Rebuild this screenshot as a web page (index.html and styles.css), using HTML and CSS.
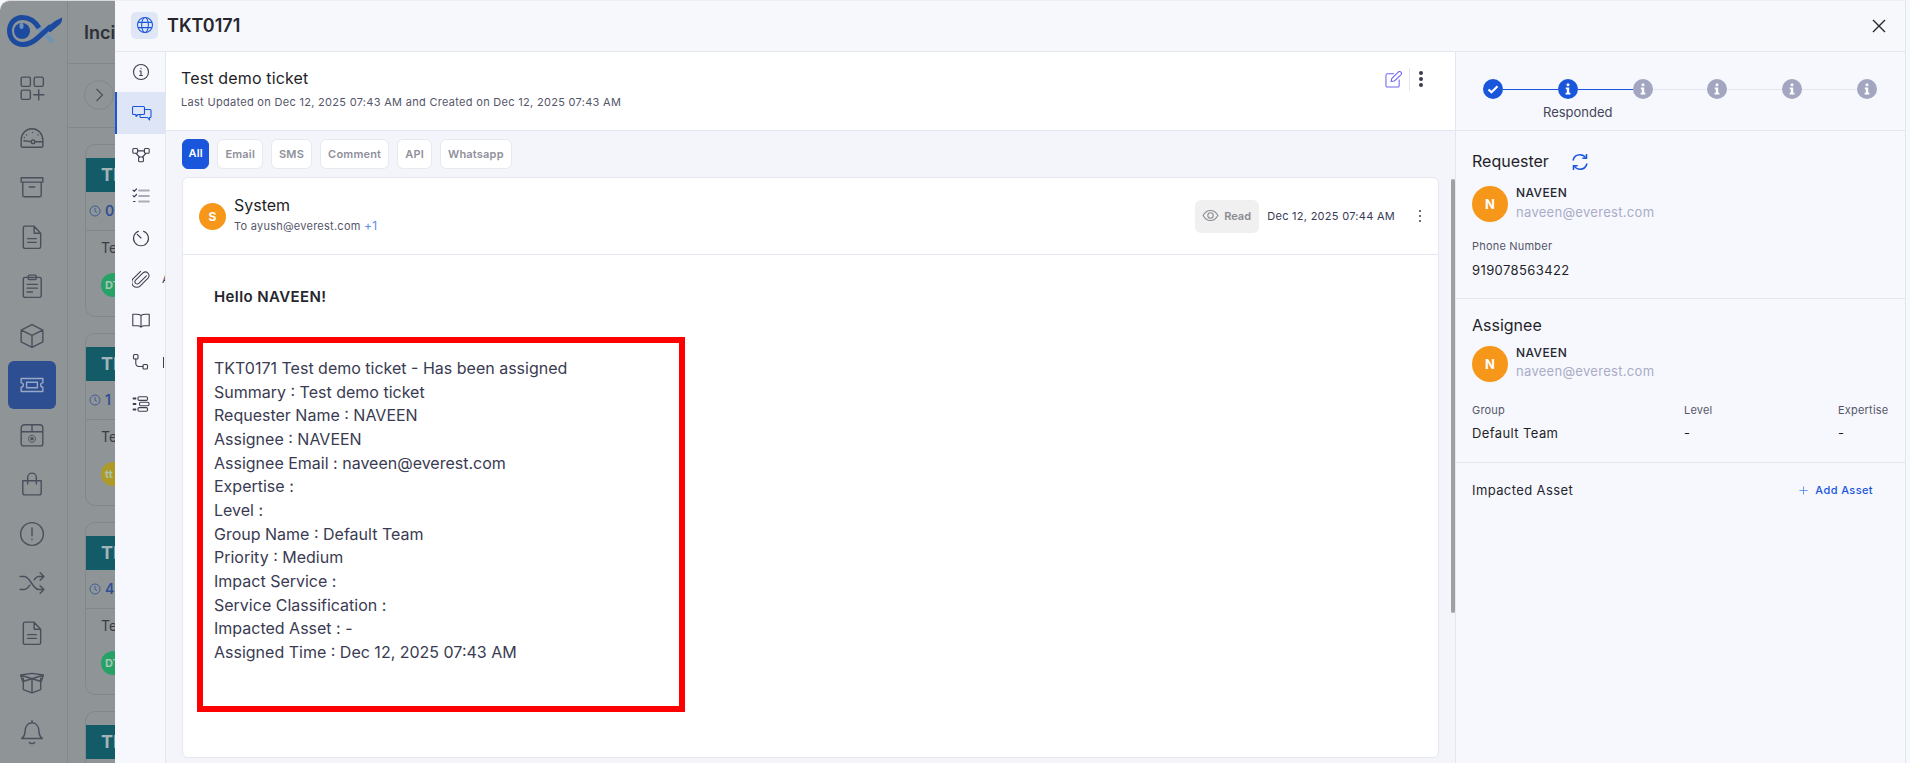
FILE: index.html
```html
<!DOCTYPE html>
<html lang="en">
<head>
    <meta charset="UTF-8">
    <meta name="viewport" content="width=device-width, initial-scale=1.0">
    <title>TKT0171</title>
    <link rel="stylesheet" href="styles.css">
</head>
<body>
    <svg class="defs" aria-hidden="true">
        <symbol id="step-i" viewBox="0 0 20 20">
            <circle cx="10" cy="5.8" r="1.5" fill="#fff"/>
            <path d="M7.8 8.6h3.4v5.2h1.2v1.6H7.6v-1.6h1.2v-3.6h-1z" fill="#fff"/>
        </symbol>
        <symbol id="eye" viewBox="0 0 24 24">
            <path d="M1.500 12c2.600-4.700 6.200-7 10.500-7s7.900 2.300 10.500 7c-2.600 4.700-6.200 7-10.500 7S4.100 16.700 1.500 12z" fill="none" stroke="currentColor" stroke-width="1.500"/>
            <circle cx="12" cy="12" r="3.800" fill="none" stroke="currentColor" stroke-width="1.500"/>
        </symbol>
    </svg>

    <!-- page behind the drawer, dimmed -->
    <div class="backdrop">
        <aside class="sidebar">
            <svg class="logo" viewBox="0 0 55 32">
                <path d="M31 12 46 27" fill="none" stroke="#6f93b5" stroke-width="4.500"/>
                <path d="M32 13C28 6 22 2.500 15 2.500 8 2.500 2.500 8 2.500 16S8.500 29.500 16 29.500c6 0 10-2.500 14-6L44 11" fill="none" stroke="#1c4a9e" stroke-width="5"/>
                <path d="M55 2.500c.3 3-.5 5-2.500 7L43 17.500l-4-4.500 9-7z" fill="#1c4a9e"/>
                <circle cx="15" cy="16" r="8" fill="#1c4a9e"/>
                <rect x="12.500" y="8" width="4" height="6" rx="2" fill="#6f93b5"/>
            </svg>
            <nav class="nav">
                <a class="nav-item"><svg viewBox="0 0 24 24"><rect x="2" y="2" width="8.500" height="8.500" rx="1.500"/><rect x="14" y="2" width="8.500" height="8.500" rx="1.500"/><rect x="2" y="14" width="8.500" height="8.500" rx="1.500"/><path d="M18.200 13.500v9.500M13.500 18.200H23"/></svg></a>
                <a class="nav-item"><svg viewBox="0 0 24 24"><path d="M3 20.500h18c.7 0 1-.5 1-1.200V14C22 8 17.500 3.500 12 3.500S2 8 2 14v5.300c0 .7.300 1.200 1 1.200z"/><circle cx="13" cy="15.500" r="1.700"/><path d="M4.500 14.500l6.700.8M14.700 15.500H22M7 9.200v.1M12.500 6.800v.1M17.500 9.200v.1M5 11.500v.1"/></svg></a>
                <a class="nav-item"><svg viewBox="0 0 24 24"><path d="M2 3.500h20v4H2zM3.500 7.500v12a1.500 1.500 0 0 0 1.500 1.500h14a1.500 1.500 0 0 0 1.500-1.500v-12M9.500 12h5"/></svg></a>
                <a class="nav-item"><svg viewBox="0 0 24 24"><path d="M4 3.500A1.500 1.500 0 0 1 5.500 2H14l6 6.500V21a1.500 1.500 0 0 1-1.500 1.500h-13A1.500 1.500 0 0 1 4 21zM14 2v6.500h6M8 13.500h8M8 17h8"/></svg></a>
                <a class="nav-item"><svg viewBox="0 0 24 24"><rect x="4" y="4" width="16.500" height="18.500" rx="1.500"/><rect x="8.500" y="2" width="7.500" height="4" rx="1"/><path d="M7.500 10.500h9.500M7.500 14h9.500M7.500 17.500h5"/></svg></a>
                <a class="nav-item"><svg viewBox="0 0 24 24"><path d="M12 1.500 22 6.500v11l-10 5-10-5v-11zM2 6.500l10 5 10-5M12 11.500v11"/></svg></a>
                <a class="nav-item nav-item-active"><svg viewBox="0 0 24 24"><path d="M2 6h20v4a2 2 0 0 0 0 4v4H2v-4a2 2 0 0 0 0-4zM7 9.500h10v5H7z"/></svg></a>
                <a class="nav-item"><svg viewBox="0 0 24 24"><path d="M2 9V5.500A3 3 0 0 1 5 2.500h14a3 3 0 0 1 3 3V9M12 2.500V9M2 9h20v11a2 2 0 0 1-2 2H4a2 2 0 0 1-2-2z"/><circle cx="12" cy="15.500" r="1"/><circle cx="12" cy="15.500" r="3.200" stroke-dasharray="1.500 .7" stroke-width=".9"/></svg></a>
                <a class="nav-item"><svg viewBox="0 0 24 24"><path d="M3.500 9h17v11a2 2 0 0 1-2 2h-13a2 2 0 0 1-2-2zM8 12V6a4 4 0 0 1 8 0v6"/></svg></a>
                <a class="nav-item"><svg viewBox="0 0 24 24"><circle cx="12" cy="12" r="10.500"/><path d="M12 6.500v7M12 16.800v.4"/></svg></a>
                <a class="nav-item"><svg viewBox="0 0 24 24"><path d="M1 6h4c5 0 8 12 13 12h5M1 18h4c2 0 3.500-2 5-4M14 9c1-1.500 2.500-3 4-3h5M19.500 2.500 23 6l-3.500 3.500M19.500 14.500 23 18l-3.500 3.500"/></svg></a>
                <a class="nav-item"><svg viewBox="0 0 24 24"><path d="M4 3.500A1.500 1.500 0 0 1 5.500 2H14l6 6.500V21a1.500 1.500 0 0 1-1.500 1.500h-13A1.500 1.500 0 0 1 4 21zM14 2v6.500h6M8 13.500h8M8 17h8"/></svg></a>
                <a class="nav-item"><svg viewBox="0 0 24 24"><path d="M12 9v13M4 8.500V19l8 3 8-3V8.500M12 9 1.500 5.500l2 6L12 9l8.500 2.500 2-6zM1.500 5.500 12 4l10.500 1.500"/></svg></a>
                <a class="nav-item"><svg viewBox="0 0 24 24"><path d="M12 1.500v2M5.500 12c0-5 2.500-8.500 6.500-8.500s6.500 3.500 6.500 8.500c0 3 1 4.500 3 6H2.500c2-1.500 3-3 3-6zM9.500 21.500c1 1.500 4 1.500 5 0"/></svg></a>
            </nav>
        </aside>
        <main class="peek">
            <div class="peek-title">Incidents</div>
            <div class="peek-tools"><span class="peek-toggle"><svg viewBox="0 0 12 20"><path d="M2 2l8 8-8 8"/></svg></span></div>
            <div class="peek-list">
                <div class="peek-card">
                    <div class="peek-band">TKT0171</div>
                    <div class="peek-time"><svg viewBox="0 0 24 24"><circle cx="12" cy="12" r="10"/><path d="M12 6v6.500l4 2.500"/></svg>0</div>
                    <div class="peek-text">Test</div>
                    <span class="peek-avatar peek-avatar-green">DT</span>
                </div>
                <div class="peek-card">
                    <div class="peek-band">TKT0170</div>
                    <div class="peek-time"><svg viewBox="0 0 24 24"><circle cx="12" cy="12" r="10"/><path d="M12 6v6.500l4 2.500"/></svg>1</div>
                    <div class="peek-text">Test</div>
                    <span class="peek-avatar peek-avatar-gold">tt</span>
                </div>
                <div class="peek-card">
                    <div class="peek-band">TKT0169</div>
                    <div class="peek-time"><svg viewBox="0 0 24 24"><circle cx="12" cy="12" r="10"/><path d="M12 6v6.500l4 2.500"/></svg>4</div>
                    <div class="peek-text">Test</div>
                    <span class="peek-avatar peek-avatar-green">DT</span>
                </div>
                <div class="peek-card">
                    <div class="peek-band">TKT0168</div>
                </div>
            </div>
        </main>
    </div>

    <div class="drawer">
        <div class="drawer-inner">
            <header class="drawer-head">
                <span class="head-icon">
                    <svg viewBox="0 0 24 24"><circle cx="12" cy="12" r="10"/><ellipse cx="12" cy="12" rx="4.500" ry="10"/><path d="M2.800 8.500h18.400M2.800 15.500h18.400"/></svg>
                </span>
                <h1>TKT0171</h1>
                <svg class="close" viewBox="0 0 14 14"><path d="M1 1l12 12M13 1 1 13"/></svg>
            </header>

            <div class="drawer-body">
                <nav class="rail">
                    <a class="rail-item"><svg viewBox="0 0 18 18"><circle cx="9" cy="9" r="7.500"/><path d="M9 5.200v.6M7.800 8H9v4.500M7.600 12.500h2.800"/></svg></a>
                    <a class="rail-item rail-item-active"><svg viewBox="0 0 20 18"><path d="M1.500 2.500h10a1 1 0 0 1 1 1v6a1 1 0 0 1-1 1H6l-2 2v-2H1.500a1 1 0 0 1-1-1v-6a1 1 0 0 1 1-1z"/><path d="M13 5.500h5a1 1 0 0 1 1 1v6a1 1 0 0 1-1 1h-.5v2.500l-2-2.500H9a1 1 0 0 1-1-1v-2"/></svg></a>
                    <a class="rail-item"><svg viewBox="0 0 18 18"><rect x=".8" y="2.500" width="4.800" height="4.800" rx="1"/><rect x="12.400" y="2.500" width="4.800" height="4.800" rx="1"/><rect x="6.600" y="11" width="4.800" height="4.800" rx="1"/><path d="M5.600 4.900h6.800M4 7.300l3.500 3.700M14 7.300l-3.500 3.700"/></svg></a>
                    <a class="rail-item rail-item-muted"><svg viewBox="0 0 18 18"><path d="M7 3.500h10M7 9h10M7 14.500h10" stroke="#a9abb8" stroke-width="1.800"/><path d="M1 3.200l1.200 1.200L4.500 2M1 8.700l1.200 1.200L4.500 7.500M1.500 14.500h1.500" stroke-width="1.200"/></svg></a>
                    <a class="rail-item"><svg viewBox="0 0 18 18"><path d="M6.500 2.200A7.500 7.500 0 1 0 11.500 2.200"/><path d="M5.200 5.300 9 9"/></svg></a>
                    <a class="rail-item"><svg viewBox="0 0 18 18"><path d="M15.500 5.500 7.600 13.400a2.300 2.300 0 0 1-3.300-3.300l7.900-7.800a3.800 3.800 0 0 1 5.300 5.300l-8.300 8.300a5.200 5.200 0 0 1-7.400-7.400L9.500 1" transform="translate(-.5 .5) scale(.96)"/></svg><span class="rail-clip">A</span></a>
                    <a class="rail-item"><svg viewBox="0 0 18 18"><path d="M9 3.500C7.800 2.700 6.300 2.300 4.500 2.300H.8v11.500h4.500c1.500 0 2.800.4 3.700 1.300.9-.9 2.200-1.300 3.700-1.300h4.500V2.300h-3.700c-1.800 0-3.300.4-4.500 1.200zM9 3.500v11.600"/></svg></a>
                    <a class="rail-item"><svg viewBox="0 0 18 18"><rect x="1.500" y="1.500" width="4.500" height="4.500" rx="1"/><rect x="11" y="11.500" width="4.500" height="4.500" rx="1"/><path d="M3.800 6v4.500a3 3 0 0 0 3 3H11"/></svg><span class="rail-clip rail-clip-bar"></span></a>
                    <a class="rail-item"><svg viewBox="0 0 18 18"><rect x="6" y="1.800" width="9.500" height="3.600" rx="1.200"/><rect x="7.500" y="7.200" width="9.500" height="3.600" rx="1.200"/><rect x="6" y="12.600" width="9.500" height="3.600" rx="1.200"/><path d="M1.500 3.500h2M1.500 9h2M1.500 14.500h2" stroke-width="1.800"/></svg></a>
                </nav>

                <section class="middle">
                    <div class="topic">
                        <div class="topic-text">
                            <h2>Test demo ticket</h2>
                            <p>Last Updated on Dec 12, 2025 07:43 AM and Created on Dec 12, 2025 07:43 AM</p>
                        </div>
                        <svg class="edit" viewBox="0 0 18 18"><path d="M9.500 3H2.500A1.500 1.500 0 0 0 1 4.500v11A1.500 1.500 0 0 0 2.500 17h11a1.500 1.500 0 0 0 1.500-1.500V9"/><path d="M6.500 11l.7-3L14 1.200a1.500 1.500 0 0 1 2.800 2.800L10 10.500z"/></svg>
                        <span class="topic-sep"></span>
                        <span class="dots dots-big"><i></i><i></i><i></i></span>
                    </div>

                    <div class="thread-wrap">
                        <div class="thread">
                            <div class="tabs">
                                <button class="tab tab-active">All</button>
                                <button class="tab">Email</button>
                                <button class="tab">SMS</button>
                                <button class="tab">Comment</button>
                                <button class="tab">API</button>
                                <button class="tab">Whatsapp</button>
                            </div>
                            <article class="message">
                                <div class="message-head">
                                    <span class="avatar avatar-small">S</span>
                                    <div class="sender">
                                        <div class="sender-name">System</div>
                                        <div class="sender-to">To ayush@everest.com <span class="more">+1</span></div>
                                    </div>
                                    <span class="read"><svg><use href="#eye"/></svg>Read</span>
                                    <span class="message-date">Dec 12, 2025 07:44 AM</span>
                                    <span class="dots"><i></i><i></i><i></i></span>
                                </div>
                                <div class="message-body">
                                    <p class="hello">Hello NAVEEN!</p>
                                    <div class="mark">
                                        <p>TKT0171 Test demo ticket - Has been assigned</p>
                                        <p>Summary : Test demo ticket</p>
                                        <p>Requester Name : NAVEEN</p>
                                        <p>Assignee : NAVEEN</p>
                                        <p>Assignee Email : naveen@everest.com</p>
                                        <p>Expertise :</p>
                                        <p>Level :</p>
                                        <p>Group Name : Default Team</p>
                                        <p>Priority : Medium</p>
                                        <p>Impact Service :</p>
                                        <p>Service Classification :</p>
                                        <p>Impacted Asset : -</p>
                                        <p>Assigned Time : Dec 12, 2025 07:43 AM</p>
                                    </div>
                                </div>
                            </article>
                        </div>
                        <div class="scroll"><div class="scroll-thumb"></div></div>
                    </div>
                </section>

                <aside class="details">
                    <div class="status">
                        <div class="steps">
                            <span class="step step-done"><svg viewBox="0 0 20 20"><path d="M5.500 10.500l3 2.800 6-6" fill="none" stroke="#fff" stroke-width="2.200"/></svg></span>
                            <span class="step-line step-line-on"></span>
                            <span class="step step-done"><svg><use href="#step-i"/></svg></span>
                            <span class="step-line step-line-on"></span>
                            <span class="step"><svg><use href="#step-i"/></svg></span>
                            <span class="step-line"></span>
                            <span class="step"><svg><use href="#step-i"/></svg></span>
                            <span class="step-line"></span>
                            <span class="step"><svg><use href="#step-i"/></svg></span>
                            <span class="step-line"></span>
                            <span class="step"><svg><use href="#step-i"/></svg></span>
                        </div>
                        <div class="step-label">Responded</div>
                    </div>

                    <div class="block block-requester">
                        <div class="block-title">
                            <h3>Requester</h3>
                            <svg class="refresh" viewBox="0 0 18 18"><path d="M2 7.500C2.800 4 5.500 1.800 9 1.800c2.300 0 4.300 1 5.700 2.800M16 10.500c-.8 3.500-3.500 5.700-7 5.700-2.300 0-4.300-1-5.700-2.800"/><path d="M15.500 1v4.200h-4.200M2.500 17v-4.200h4.200"/></svg>
                        </div>
                        <div class="person">
                            <span class="avatar">N</span>
                            <div>
                                <div class="person-name">NAVEEN</div>
                                <div class="person-mail">naveen@everest.com</div>
                            </div>
                        </div>
                        <div class="field-label field-phone">Phone Number</div>
                        <div class="field-value">919078563422</div>
                    </div>

                    <div class="block block-assignee">
                        <div class="block-title">
                            <h3>Assignee</h3>
                        </div>
                        <div class="person">
                            <span class="avatar">N</span>
                            <div>
                                <div class="person-name">NAVEEN</div>
                                <div class="person-mail">naveen@everest.com</div>
                            </div>
                        </div>
                        <div class="assign-grid">
                            <div class="field-label">Group</div>
                            <div class="field-label">Level</div>
                            <div class="field-label">Expertise</div>
                            <div class="field-value">Default Team</div>
                            <div class="field-value">-</div>
                            <div class="field-value">-</div>
                        </div>
                    </div>

                    <div class="asset">
                        <span class="asset-title">Impacted Asset</span>
                        <a class="asset-add"><svg viewBox="0 0 10 10"><path d="M5 .5v9M.5 5h9"/></svg>Add Asset</a>
                    </div>
                </aside>
            </div>
        </div>
    </div>
</body>
</html>
```
FILE: styles.css
```css
* {
    margin: 0;
    padding: 0;
    box-sizing: border-box;
}

body {
    font-family: Inter, "Noto Sans", sans-serif;
    height: 763px;
    overflow: hidden;
    display: flex;
    background: #f7f8fd;
    color: #26262f;
}

.defs {
    display: none;
}

/* dimmed page */
.backdrop {
    width: 115px;
    flex: none;
    display: flex;
    overflow: hidden;
    background: #8f9497;
    border-top: 1px solid #d9dadb;
    border-top-left-radius: 10px;
}

.sidebar {
    width: 68px;
    flex: none;
    padding-top: 14px;
    border-right: 1px solid #82878c;
}

.logo {
    display: block;
    width: 55px;
    height: 32px;
    margin: 0 0 17px 7px;
}

.nav-item {
    display: flex;
    align-items: center;
    justify-content: center;
    width: 48px;
    height: 48px;
    margin: 0 0 1.500px 8px;
    border-radius: 6px;
}

.nav-item svg {
    width: 26px;
    height: 26px;
    fill: none;
    stroke: #4b4f5c;
    stroke-width: 1.300;
    stroke-linecap: round;
    stroke-linejoin: round;
}

.nav-item-active {
    background: #2d4f92;
}

.nav-item-active svg {
    stroke: #9aa8c6;
}

.peek {
    flex: none;
    width: 200px;
}

.peek-title {
    height: 63px;
    padding: 21px 0 0 16px;
    font-size: 18px;
    font-weight: 600;
    line-height: 22px;
    color: #2d3039;
    border-bottom: 1px solid #82878c;
}

.peek-tools {
    height: 64px;
    padding: 16px 0 0 16px;
    border-bottom: 1px solid #82878c;
}

.peek-toggle {
    display: flex;
    align-items: center;
    justify-content: center;
    width: 30px;
    height: 30px;
    border: 1px solid #82878c;
    border-radius: 50%;
}

.peek-toggle svg {
    width: 9px;
    height: 16px;
    fill: none;
    stroke: #4a4d57;
    stroke-width: 1.500;
}

.peek-list {
    padding: 16px 0 0 17px;
}

.peek-card {
    height: 173px;
    margin-bottom: 16px;
    padding-top: 13px;
    border: 1px solid #82878c;
    border-radius: 10px;
}

.peek-band {
    height: 34px;
    padding-left: 15px;
    font-size: 18px;
    font-weight: 700;
    line-height: 34px;
    color: #a3b4b8;
    background: #135b66;
}

.peek-time {
    display: flex;
    align-items: center;
    gap: 4px;
    height: 39px;
    padding: 0 0 1px 3px;
    font-size: 14px;
    font-weight: 600;
    color: #2f4f95;
    border-bottom: 1px solid #82878c;
}

.peek-time svg {
    width: 12px;
    height: 12px;
    fill: none;
    stroke: #2f4f95;
    stroke-width: 1.600;
}

.peek-text {
    padding: 7px 0 0 15px;
    font-size: 14px;
    line-height: 20px;
    color: #3a3d46;
}

.peek-avatar {
    display: block;
    width: 24px;
    height: 24px;
    margin: 15px 0 0 15px;
    padding-left: 4px;
    border-radius: 50%;
    font-size: 11px;
    font-weight: 700;
    line-height: 24px;
    color: #a7c4b4;
}

.peek-avatar-green {
    background: #27a267;
}

.peek-avatar-gold {
    background: #ae9a27;
}

/* drawer */
.drawer {
    flex: 1;
    min-width: 0;
}

.drawer-inner {
    width: 1791px;
    height: 763px;
    display: flex;
    flex-direction: column;
    background: #f7f8fd;
    border-top: 1px solid #eeeff2;
    border-right: 1px solid #e3e5ef;
}

.drawer-head {
    height: 51px;
    flex: none;
    display: flex;
    align-items: center;
    padding: 0 19px 2px 16px;
    background: #f7f8fb;
    border-bottom: 1px solid #e3e5ef;
}

.head-icon {
    width: 27px;
    height: 27px;
    display: flex;
    align-items: center;
    justify-content: center;
    background: #dfe7f6;
    border-radius: 5px;
}

.head-icon svg {
    width: 18px;
    height: 18px;
    fill: none;
    stroke: #1a56db;
    stroke-width: 1.400;
}

h1 {
    margin: 2px 0 0 9px;
    font-size: 18px;
    font-weight: 600;
    line-height: 24px;
    color: #26262f;
    flex: 1;
}

.close {
    width: 14px;
    height: 14px;
    margin-top: 2px;
    fill: none;
    stroke: #26262f;
    stroke-width: 1.400;
}

.drawer-body {
    flex: 1;
    min-height: 0;
    display: flex;
}

.rail {
    width: 51px;
    flex: none;
    background: #f7f8fd;
    border-right: 1px solid #e3e5ef;
}

.rail-item {
    height: 41.500px;
    display: flex;
    align-items: center;
    padding-left: 17px;
    overflow: hidden;
}

.rail-item:first-child {
    height: 40px;
}

.rail-item svg {
    width: 18px;
    height: 18px;
    flex: none;
    fill: none;
    stroke: #3d3e4c;
    stroke-width: 1.100;
    stroke-linecap: round;
    stroke-linejoin: round;
}

.rail-item-active {
    height: 42px;
    background: #dde5f6;
    border-left: 2px solid #1a56db;
    padding-left: 15px;
}

.rail-item-active svg {
    width: 20px;
    stroke: #1a56db;
}

.rail-clip {
    margin-left: 12px;
    font-size: 11px;
    line-height: 14px;
    color: #3d3e4c;
}

.rail-clip-bar {
    width: 1px;
    height: 11px;
    background: #3d3e4c;
    margin-left: 13px;
}

.middle {
    flex: 1;
    min-width: 0;
    display: flex;
    flex-direction: column;
    background: #f4f5fb;
}

.topic {
    height: 79px;
    flex: none;
    display: flex;
    align-items: flex-start;
    padding: 16px 32px 0 15px;
    background: #fff;
    border-bottom: 1px solid #e3e5ef;
}

.topic-text {
    flex: 1;
}

h2 {
    font-size: 16px;
    font-weight: 400;
    line-height: 20px;
    letter-spacing: 0.150px;
    color: #1f1f28;
}

.topic p {
    margin-top: 7px;
    font-size: 11px;
    line-height: 14px;
    letter-spacing: 0.300px;
    color: #55566a;
}

.edit {
    width: 17px;
    height: 17px;
    margin: 3px 7px 0 0;
    fill: none;
    stroke: #6f63f2;
    stroke-width: 1.100;
}

.topic-sep {
    width: 1px;
    height: 23px;
    background: #e3e5ef;
}

.dots {
    display: flex;
    flex-direction: column;
    align-items: center;
    gap: 3px;
    width: 4px;
}

.dots i {
    width: 2px;
    height: 2px;
    background: #3b3c4c;
    border-radius: 50%;
}

.dots-big {
    gap: 2px;
    margin: 3px 0 0 9px;
}

.dots-big i {
    width: 4px;
    height: 4px;
}

.thread-wrap {
    flex: 1;
    min-height: 0;
    display: flex;
}

.thread {
    flex: 1;
    min-width: 0;
    padding: 8px 12px 0 16px;
}

.tabs {
    display: flex;
    gap: 8px;
    margin-bottom: 8px;
}

.tab {
    height: 30px;
    padding: 0 7px;
    font-family: inherit;
    font-size: 11px;
    font-weight: 600;
    letter-spacing: 0.200px;
    color: #8f909c;
    background: #fff;
    border: 1px solid #e7e8f0;
    border-radius: 6px;
}

.tab-active {
    color: #fff;
    background: #1a56db;
    border-color: #1a56db;
    padding: 0 5.500px 3px;
}

.message {
    height: 581px;
    background: #fff;
    border: 1px solid #e6e7f0;
    border-radius: 6px;
}

.message-head {
    height: 77px;
    display: flex;
    align-items: center;
    padding: 0 16px;
    border-bottom: 1px solid #e3e5ef;
}

.avatar {
    width: 36px;
    height: 36px;
    flex: none;
    display: flex;
    align-items: center;
    justify-content: center;
    font-size: 13px;
    font-weight: 700;
    color: #fff;
    background: #f7971a;
    border-radius: 50%;
}

.avatar-small {
    width: 27px;
    height: 27px;
    font-size: 12px;
}

.sender {
    flex: 1;
    margin: -5px 0 0 8px;
}

.sender-name {
    font-size: 16px;
    font-weight: 400;
    line-height: 22px;
    color: #1f1f28;
}

.sender-to {
    margin-top: 3px;
    font-size: 11px;
    line-height: 14px;
    letter-spacing: 0.250px;
    color: #55566a;
}

.more {
    font-size: 12px;
    color: #5b8ce8;
}

.read {
    display: flex;
    align-items: center;
    gap: 5px;
    width: 64px;
    height: 33px;
    padding-left: 7px;
    font-size: 11px;
    font-weight: 600;
    color: #8a8b92;
    background: #f0f0f1;
    border-radius: 6px;
}

.read svg {
    width: 17px;
    height: 17px;
    color: #8a8b92;
    margin-top: -1px;
}

.message-date {
    margin: 0 23px 0 8px;
    font-size: 11px;
    letter-spacing: 0.280px;
    color: #383a56;
}

.message-body {
    padding: 32px 0 0 14px;
}

.hello {
    padding-left: 17px;
    font-size: 15px;
    font-weight: 600;
    line-height: 20px;
    letter-spacing: 0.400px;
    color: #26262f;
}

.mark {
    width: 488px;
    height: 375px;
    margin-top: 30px;
    padding: 14px 0 0 11px;
    border: 6px solid #ff0000;
    font-size: 16px;
    line-height: 23.650px;
    color: #3a3b52;
}

.scroll {
    width: 4px;
    flex: none;
    margin-top: 48px;
}

.scroll-thumb {
    height: 434px;
    background: #a0a0a0;
    border-radius: 2px;
}

/* right column */
.details {
    width: 450px;
    flex: none;
    border-left: 1px solid #e3e5ef;
}

.status {
    height: 79px;
    padding: 27px 0 0 27px;
    border-bottom: 1px solid #e3e5ef;
}

.steps {
    display: flex;
    align-items: center;
    width: 394px;
}

.step {
    width: 20px;
    height: 20px;
    flex: none;
    background: #a3a6c0;
    border-radius: 50%;
}

.step svg {
    display: block;
    width: 20px;
    height: 20px;
}

.step-done {
    background: #1a56db;
}

.step-line {
    flex: 1;
    height: 1px;
    background: #e3e5ef;
}

.step-line-on {
    background: #1a56db;
}

.step-label {
    margin: 5px 0 0 60px;
    font-size: 13px;
    line-height: 16px;
    color: #44455a;
}

.block {
    padding: 0 16px;
    border-bottom: 1px solid #e3e5ef;
}

.block-requester {
    height: 168px;
    padding-top: 20px;
}

.block-assignee {
    height: 164px;
    padding-top: 16px;
}

.block-title {
    display: flex;
    align-items: center;
    height: 20px;
    margin-bottom: 15px;
}

.block-assignee .block-title {
    margin-bottom: 11px;
}

h3 {
    font-size: 16px;
    font-weight: 400;
    color: #1f1f28;
}

.refresh {
    width: 18px;
    height: 18px;
    margin: 2px 0 0 22px;
    fill: none;
    stroke: #1a56db;
    stroke-width: 1.500;
}

.person {
    display: flex;
    gap: 8px;
}

.person-name {
    font-size: 12px;
    font-weight: 500;
    line-height: 14px;
    letter-spacing: 0.400px;
    color: #26262f;
}

.person-mail {
    margin-top: 4px;
    font-size: 13px;
    line-height: 16px;
    letter-spacing: 0.300px;
    color: #a9acc8;
}

.block-assignee .person-mail {
    margin-top: 3px;
}

.field-label {
    font-size: 11px;
    line-height: 14px;
    letter-spacing: 0.200px;
    color: #55566a;
}

.field-phone {
    margin-top: 17px;
}

.field-value {
    margin-top: 10px;
    font-size: 13px;
    font-weight: 400;
    line-height: 14px;
    letter-spacing: 0.400px;
    color: #1f1f28;
}

.assign-grid {
    display: grid;
    grid-template-columns: 212px 154px auto;
    margin-top: 21px;
}

.assign-grid .field-value {
    margin-top: 9px;
}

.asset {
    display: flex;
    justify-content: space-between;
    align-items: center;
    padding: 19px 32px 0 16px;
}

.asset-title {
    font-size: 13px;
    font-weight: 400;
    letter-spacing: 0.400px;
    color: #26262f;
}

.asset-add {
    display: flex;
    align-items: center;
    gap: 7px;
    font-size: 11px;
    font-weight: 500;
    letter-spacing: 0.400px;
    color: #1a56db;
}

.asset-add svg {
    width: 9px;
    height: 9px;
    fill: none;
    stroke: #5b8ce8;
    stroke-width: 1;
}
```
